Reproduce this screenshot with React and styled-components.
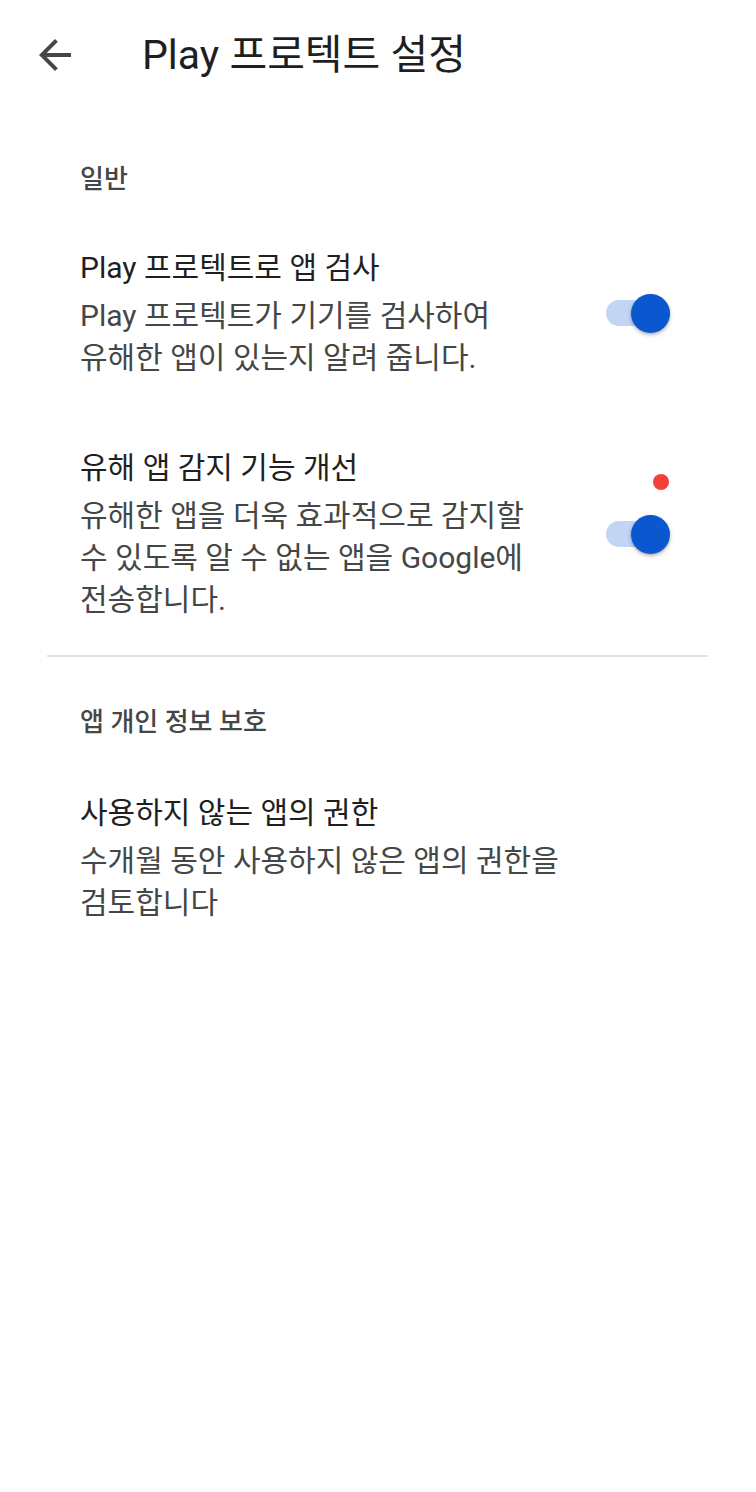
import React from "react";
import styled, { createGlobalStyle } from "styled-components";

const GlobalStyle = createGlobalStyle`
  html, body {
    margin: 0;
    padding: 0;
    background: #ffffff;
  }
  body {
    font-family: Roboto, "Noto Sans CJK KR", sans-serif;
    -webkit-font-smoothing: antialiased;
  }
`;

const Screen = styled.div`
  width: 756px;
  min-height: 1492px;
  background: #ffffff;
  display: flex;
  flex-direction: column;
`;

const TopBar = styled.header`
  height: 110px;
  display: flex;
  align-items: center;
`;

const BackButton = styled.button`
  width: 110px;
  height: 110px;
  border: none;
  background: transparent;
  padding: 0;
  display: flex;
  align-items: center;
  justify-content: center;
  color: #444746;
  cursor: pointer;
`;

const Title = styled.h1`
  margin: 0 0 0 32px;
  font-size: 41px;
  font-weight: 400;
  color: #1f1f1f;
  line-height: 48px;
`;

const SectionHeader = styled.h2`
  margin: ${({ top }) => top}px 0 0 80px;
  font-size: 26px;
  font-weight: 500;
  color: #444746;
  line-height: 32px;
`;

const Item = styled.div`
  display: flex;
  align-items: center;
  padding: 0 86px 0 80px;
  margin-top: ${({ top }) => top}px;
`;

const ItemText = styled.div`
  flex: 1;
  display: flex;
  flex-direction: column;
`;

const ItemTitle = styled.div`
  font-size: 30px;
  line-height: 42px;
  color: #1f1f1f;
  margin-bottom: 6px;
  white-space: nowrap;
`;

const ItemSummary = styled.div`
  font-size: 30px;
  line-height: 42px;
  color: #444746;
  white-space: nowrap;
`;

const ToggleWrap = styled.div`
  position: relative;
  width: 64px;
  height: 40px;
  flex-shrink: 0;
`;

const Track = styled.div`
  position: absolute;
  left: 0;
  top: 7px;
  width: 60px;
  height: 26px;
  border-radius: 13px;
  background: #c3d5f5;
`;

const Thumb = styled.div`
  position: absolute;
  right: 0;
  top: 1px;
  width: 39px;
  height: 39px;
  border-radius: 50%;
  background: #0b57d0;
  box-shadow: 0 2px 4px rgba(0, 0, 0, 0.25), 0 1px 2px rgba(0, 0, 0, 0.12);
`;

const Badge = styled.span`
  position: absolute;
  right: 1px;
  top: -40px;
  width: 16px;
  height: 16px;
  border-radius: 50%;
  background: #f4403a;
`;

const Divider = styled.hr`
  margin: 34px 48px 0 47px;
  border: none;
  height: 2px;
  background: #e3e3e3;
`;

const Toggle = ({ badge }) => (
  <ToggleWrap>
    <Track />
    <Thumb />
    {badge && <Badge />}
  </ToggleWrap>
);

const BackArrow = () => (
  <svg width="48" height="48" viewBox="0 0 24 24" fill="currentColor">
    <path d="M20 11H7.83l5.59-5.59L12 4l-8 8 8 8 1.41-1.41L7.83 13H20v-2z" />
  </svg>
);

const Setting = ({ top, title, lines, toggle, badge }) => (
  <Item top={top}>
    <ItemText>
      <ItemTitle>{title}</ItemTitle>
      {lines.map((l) => (
        <ItemSummary key={l}>{l}</ItemSummary>
      ))}
    </ItemText>
    {toggle && <Toggle badge={badge} />}
  </Item>
);

export default function App() {
  return (
    <Screen>
      <GlobalStyle />
      <TopBar>
        <BackButton aria-label="뒤로">
          <BackArrow />
        </BackButton>
        <Title>Play 프로텍트 설정</Title>
      </TopBar>

      <SectionHeader top={53}>일반</SectionHeader>
      <Setting
        top={52}
        title="Play 프로텍트로 앱 검사"
        lines={["Play 프로텍트가 기기를 검사하여", "유해한 앱이 있는지 알려 줍니다."]}
        toggle
      />
      <Setting
        top={68}
        title="유해 앱 감지 기능 개선"
        lines={[
          "유해한 앱을 더욱 효과적으로 감지할",
          "수 있도록 알 수 없는 앱을 Google에",
          "전송합니다.",
        ]}
        toggle
        badge
      />
      <Divider />

      <SectionHeader top={49}>앱 개인 정보 보호</SectionHeader>
      <Setting
        top={54}
        title="사용하지 않는 앱의 권한"
        lines={["수개월 동안 사용하지 않은 앱의 권한을", "검토합니다"]}
      />
    </Screen>
  );
}
